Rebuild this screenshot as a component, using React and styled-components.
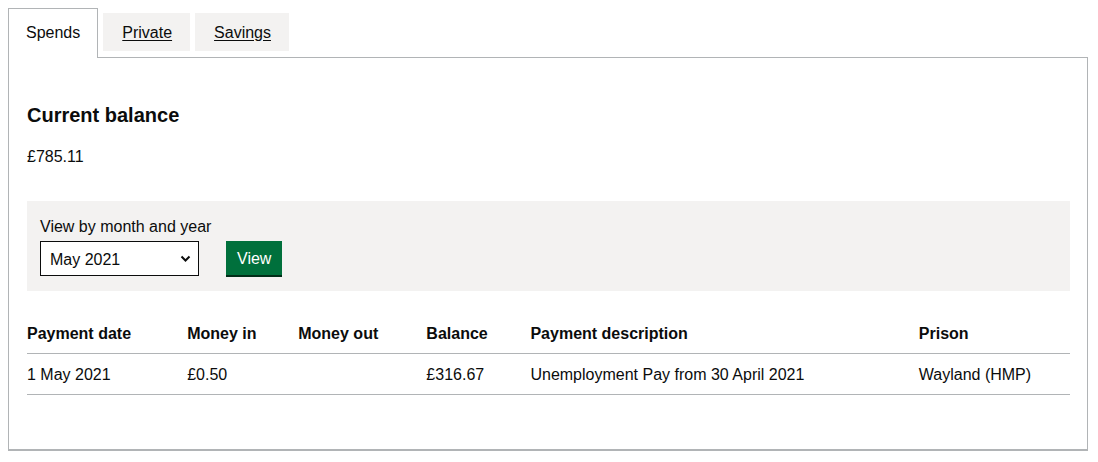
import React, { useState } from "react";
import styled, { createGlobalStyle } from "styled-components";

const GlobalStyle = createGlobalStyle`
  body {
    margin: 8px;
    font-family: "Liberation Sans", Arial, sans-serif;
    color: #0b0c0c;
    background: #ffffff;
  }
`;

const Wrapper = styled.div`
  margin-right: 2px;
`;

const TabList = styled.ul`
  display: flex;
  align-items: flex-start;
  list-style: none;
  margin: 0 0 -1px 0;
  padding: 0;
`;

const Tab = styled.li`
  position: relative;
  margin-right: 5px;
  font-size: 16px;
  line-height: 18px;
  ${(p) =>
    p.$selected
      ? `
    margin-top: 0;
    padding: 15px 17px 16px 17px;
    border: 1px solid #b1b4b6;
    border-bottom: 0;
    background: #ffffff;
    z-index: 1;
  `
      : `
    margin-top: 5px;
    padding: 11px 18px 9px 19px;
    background: #f3f2f1;
  `}
`;

const TabLink = styled.a`
  color: #0b0c0c;
  text-decoration: ${(p) => (p.$selected ? "none" : "underline")};
  text-underline-offset: 2px;
  cursor: pointer;
`;

const Panel = styled.div`
  border: 1px solid #b1b4b6;
  border-bottom-width: 2px;
  padding: 45px 17px 54px 18px;
`;

const Heading = styled.h2`
  margin: 0 0 20px;
  font-size: 20px;
  line-height: 24px;
  font-weight: 700;
`;

const Body = styled.p`
  margin: 0 0 34px;
  font-size: 16px;
  line-height: 20px;
`;

const FilterBox = styled.form`
  background: #f3f2f1;
  padding: 16px 13px 15px;
`;

const Label = styled.label`
  display: block;
  font-size: 16px;
  line-height: 20px;
  margin-bottom: 4px;
`;

const FilterRow = styled.div`
  display: flex;
  align-items: flex-start;
  gap: 27px;
`;

const SelectWrap = styled.div`
  position: relative;
  width: 159px;
  height: 35px;
`;

const Select = styled.select`
  appearance: none;
  width: 100%;
  height: 100%;
  box-sizing: border-box;
  border: 1px solid #0b0c0c;
  outline: 0.5px solid #0b0c0c;
  outline-offset: -1.5px;
  border-radius: 0;
  background: #ffffff;
  padding: 1px 24px 0 9px;
  font-family: inherit;
  font-size: 16px;
  color: #0b0c0c;
`;

const Chevron = styled.svg`
  position: absolute;
  right: 8px;
  top: 14px;
  pointer-events: none;
`;

const Button = styled.button`
  height: 34px;
  padding: 2px 11px 0;
  border: 0;
  border-radius: 0;
  background: #00703c;
  box-shadow: 0 2px 0 #002d18;
  color: #ffffff;
  font-family: inherit;
  font-size: 16px;
  line-height: 18px;
  cursor: pointer;
`;

const Table = styled.table`
  width: 100%;
  margin-top: 22px;
  border-collapse: collapse;
  table-layout: fixed;
  font-size: 16px;
  line-height: 20px;
`;

const Th = styled.th`
  box-sizing: border-box;
  width: ${(p) => p.$w}px;
  text-align: left;
  font-weight: 700;
  padding: 11px 20px 9px 0;
  border-bottom: 1px solid #b1b4b6;
`;

const Td = styled.td`
  padding: 11px 20px 9px 0;
  border-bottom: 1px solid #b1b4b6;
`;

const columns = [
  { label: "Payment date", w: 160 },
  { label: "Money in", w: 111 },
  { label: "Money out", w: 128 },
  { label: "Balance", w: 104 },
  { label: "Payment description", w: 388 },
  { label: "Prison", w: 151 },
];

const rows = [
  ["1 May 2021", "£0.50", "", "£316.67", "Unemployment Pay from 30 April 2021", "Wayland (HMP)"],
];

const tabs = ["Spends", "Private", "Savings"];

export default function App() {
  const [active, setActive] = useState("Spends");

  return (
    <Wrapper>
      <GlobalStyle />
      <TabList>
        {tabs.map((t) => (
          <Tab key={t} $selected={active === t}>
            <TabLink $selected={active === t} onClick={() => setActive(t)}>
              {t}
            </TabLink>
          </Tab>
        ))}
      </TabList>
      <Panel>
        <Heading>Current balance</Heading>
        <Body>£785.11</Body>
        <FilterBox onSubmit={(e) => e.preventDefault()}>
          <Label htmlFor="month">View by month and year</Label>
          <FilterRow>
            <SelectWrap>
              <Select id="month" defaultValue="2021-05">
                <option value="2021-05">May 2021</option>
                <option value="2021-04">April 2021</option>
                <option value="2021-03">March 2021</option>
              </Select>
              <Chevron width="11" height="8" viewBox="0 0 11 8">
                <path d="M1.5 1.5 L5.5 5.5 L9.5 1.5" fill="none" stroke="#0b0c0c" strokeWidth="2" />
              </Chevron>
            </SelectWrap>
            <Button type="submit">View</Button>
          </FilterRow>
        </FilterBox>
        <Table>
          <thead>
            <tr>
              {columns.map((c) => (
                <Th key={c.label} $w={c.w}>{c.label}</Th>
              ))}
            </tr>
          </thead>
          <tbody>
            {rows.map((r, i) => (
              <tr key={i}>
                {r.map((cell, j) => (
                  <Td key={j}>{cell}</Td>
                ))}
              </tr>
            ))}
          </tbody>
        </Table>
      </Panel>
    </Wrapper>
  );
}
